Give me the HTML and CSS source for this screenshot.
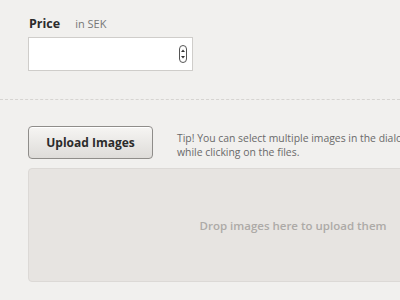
FILE: index.html
```html
<!DOCTYPE html>
<html lang="en">
<head>
  <meta charset="UTF-8">
  <title>Price and images</title>
  <link rel="stylesheet" href="styles.css">
</head>
<body>
  <div class="seccion">
    <div class="etiqueta">
      <span class="titulo">Price</span>
      <span class="unidad">in SEK</span>
    </div>
    <div class="campo">
      <span class="flechas">
        <svg width="8" height="18" viewBox="0 0 8 18">
          <rect x="0.5" y="0.5" width="7" height="17" rx="3.5" fill="#fff" stroke="#555"/>
          <path d="M4 4.5 L6 7 L2 7 Z" fill="#333"/>
          <path d="M4 13.5 L6 11 L2 11 Z" fill="#333"/>
        </svg>
      </span>
    </div>
  </div>

  <div class="separador"></div>

  <div class="subida">
    <div class="fila">
      <button class="boton">Upload Images</button>
      <p class="consejo">Tip! You can select multiple images in the dialog<br>while clicking on the files.</p>
    </div>
    <div class="zona">Drop images here to upload them</div>
  </div>
</body>
</html>
```

FILE: styles.css
```css
body {
  margin: 0;
  background-color: #f1f0ee;
  font-family: "Open Sans", Arial, sans-serif;
  overflow: hidden;
  width: 400px;
  height: 300px;
}

.seccion {
  padding: 15px 0 0 28px;
}

.etiqueta {
  display: flex;
  align-items: baseline;
  gap: 15px;
  padding-left: 1px;
  height: 22px;
}

.titulo {
  font-size: 12.5px;
  font-weight: bold;
  color: #2b2b2b;
}

.unidad {
  font-size: 11px;
  color: #777;
}

.campo {
  box-sizing: border-box;
  width: 165px;
  height: 34px;
  background-color: #fff;
  border: 1px solid #cfcdca;
  display: flex;
  align-items: center;
  justify-content: flex-end;
  padding-right: 5px;
}

.flechas svg {
  display: block;
}

.separador {
  margin-top: 28px;
  border-top: 1px dashed #d6d4d1;
}

.subida {
  padding: 26px 0 0 28px;
}

.fila {
  display: flex;
  align-items: flex-start;
  gap: 24px;
  height: 42px;
}

.boton {
  flex-shrink: 0;
  box-sizing: border-box;
  width: 125px;
  height: 33px;
  font-family: "Open Sans", Arial, sans-serif;
  font-size: 12px;
  font-weight: bold;
  color: #2b2b2b;
  background: linear-gradient(#f6f5f3, #dedcd9);
  border: 1px solid #8f8d8a;
  border-radius: 4px;
  box-shadow: inset 0 1px 0 #fff;
}

.consejo {
  margin: 5px 0 0;
  font-size: 10.4px;
  line-height: 14px;
  color: #6a6a6a;
  white-space: nowrap;
}

.zona {
  box-sizing: border-box;
  width: 530px;
  height: 114px;
  background-color: #e7e4e1;
  border: 1px solid #dcd9d6;
  border-radius: 4px;
  display: flex;
  align-items: center;
  justify-content: center;
  font-size: 11.5px;
  font-weight: 600;
  color: #adaaa7;
}
```
